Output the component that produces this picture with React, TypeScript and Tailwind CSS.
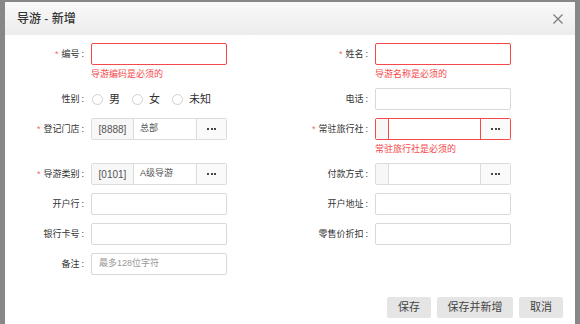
import type { ReactNode } from "react";

const font = { fontFamily: '"Liberation Sans", "Noto Sans CJK SC", sans-serif' };

function Field({
  label,
  required,
  error,
  children,
}: {
  label: string;
  required?: boolean;
  error?: string;
  children: ReactNode;
}) {
  return (
    <div className="flex flex-col mb-[8px]">
      <div className="flex items-center h-[22px]">
        <div className="w-[81px] pr-[2px] flex justify-end items-center text-[9px] leading-none text-[#333] whitespace-nowrap">
          {required && <span className="text-[#f46b6b] mr-[3px] text-[9px]">*</span>}
          <span>{label}</span>
          <span className="ml-[2px]">:</span>
        </div>
        <div className="ml-[5px] w-[136px] h-[22px] shrink-0">{children}</div>
      </div>
      {error && (
        <div className="ml-[86px] h-[15px] pt-[3px] text-[9px] leading-[12px] text-[#f5484a]">
          {error}
        </div>
      )}
    </div>
  );
}

function TextInput({ error, placeholder }: { error?: boolean; placeholder?: string }) {
  return (
    <div
      className={`w-full h-full rounded-[2px] border bg-white flex items-center px-[7px] text-[9px] text-[#999] ${
        error ? "border-[#f5484a]" : "border-[#d9d9d9]"
      }`}
    >
      {placeholder}
    </div>
  );
}

function PickInput({
  code,
  name,
  codeW,
  error,
}: {
  code?: string;
  name?: string;
  codeW: string;
  error?: boolean;
}) {
  const bc = error ? "border-[#f5484a]" : "border-[#dcdcdc]";
  return (
    <div className={`w-full h-full rounded-[2px] border bg-white flex ${bc}`}>
      <div
        className={`${codeW} shrink-0 bg-[#f7f7f7] border-r ${bc} flex items-center justify-center text-[10px] text-[#555]`}
      >
        {code}
      </div>
      <div className="flex-1 flex items-center px-[6px] text-[9px] text-[#555]">{name}</div>
      <div
        className={`w-[30px] shrink-0 bg-[#fafafa] border-l ${bc} flex items-center justify-center gap-[1.5px]`}
      >
        <span className="w-[2px] h-[2px] bg-[#444]" />
        <span className="w-[2px] h-[2px] bg-[#444]" />
        <span className="w-[2px] h-[2px] bg-[#444]" />
      </div>
    </div>
  );
}

function Radio({ label }: { label: string }) {
  return (
    <div className="flex items-center mr-[12px] shrink-0 whitespace-nowrap">
      <span className="w-[11px] h-[11px] shrink-0 rounded-full border border-[#cfcfcf] bg-white" />
      <span className="ml-[6px] text-[11px] leading-none text-[#333]">{label}</span>
    </div>
  );
}

export default function App() {
  return (
    <div className="w-[580px] h-[324px] bg-[#878787] pt-[2px] pl-[5px] overflow-hidden" style={font}>
      <div className="w-[570px] h-[322px] bg-white flex flex-col">
        <div className="h-[33px] shrink-0 bg-linear-to-b from-[#f9f9f9] to-[#ececec] flex items-center justify-between pl-[12px] pr-[12px]">
          <span className="text-[12px] font-medium text-[#333]">导游 - 新增</span>
          <svg width="10" height="10" viewBox="0 0 10 10">
            <path d="M0.5 0.5 L9.5 9.5 M9.5 0.5 L0.5 9.5" stroke="#7a7a7a" strokeWidth="1.2" />
          </svg>
        </div>

        <div className="pt-[8px] grid grid-cols-2 w-[568px] items-start">
          <Field label="编号" required error="导游编码是必须的">
            <TextInput error />
          </Field>
          <Field label="姓名" required error="导游名称是必须的">
            <TextInput error />
          </Field>

          <Field label="性别">
            <div className="h-full flex items-center pl-[1px] whitespace-nowrap">
              <Radio label="男" />
              <Radio label="女" />
              <Radio label="未知" />
            </div>
          </Field>
          <Field label="电话">
            <TextInput />
          </Field>

          <Field label="登记门店" required>
            <PickInput code="[8888]" name="总部" codeW="w-[42px]" />
          </Field>
          <Field label="常驻旅行社" required error="常驻旅行社是必须的">
            <PickInput codeW="w-[13px]" error />
          </Field>

          <Field label="导游类别" required>
            <PickInput code="[0101]" name="A级导游" codeW="w-[42px]" />
          </Field>
          <Field label="付款方式">
            <PickInput codeW="w-[13px]" />
          </Field>

          <Field label="开户行">
            <TextInput />
          </Field>
          <Field label="开户地址">
            <TextInput />
          </Field>

          <Field label="银行卡号">
            <TextInput />
          </Field>
          <Field label="零售价折扣">
            <TextInput />
          </Field>

          <Field label="备注">
            <TextInput placeholder="最多128位字符" />
          </Field>
        </div>

        <div className="flex justify-end gap-[6px] pr-[12px] pt-[14px]">
          <button className="w-[44px] h-[21px] bg-[#e5e5e5] rounded-[2px] text-[11px] text-[#444]">保存</button>
          <button className="w-[76px] h-[21px] bg-[#e5e5e5] rounded-[2px] text-[11px] text-[#444]">保存并新增</button>
          <button className="w-[44px] h-[21px] bg-[#e5e5e5] rounded-[2px] text-[11px] text-[#444]">取消</button>
        </div>
      </div>
    </div>
  );
}
